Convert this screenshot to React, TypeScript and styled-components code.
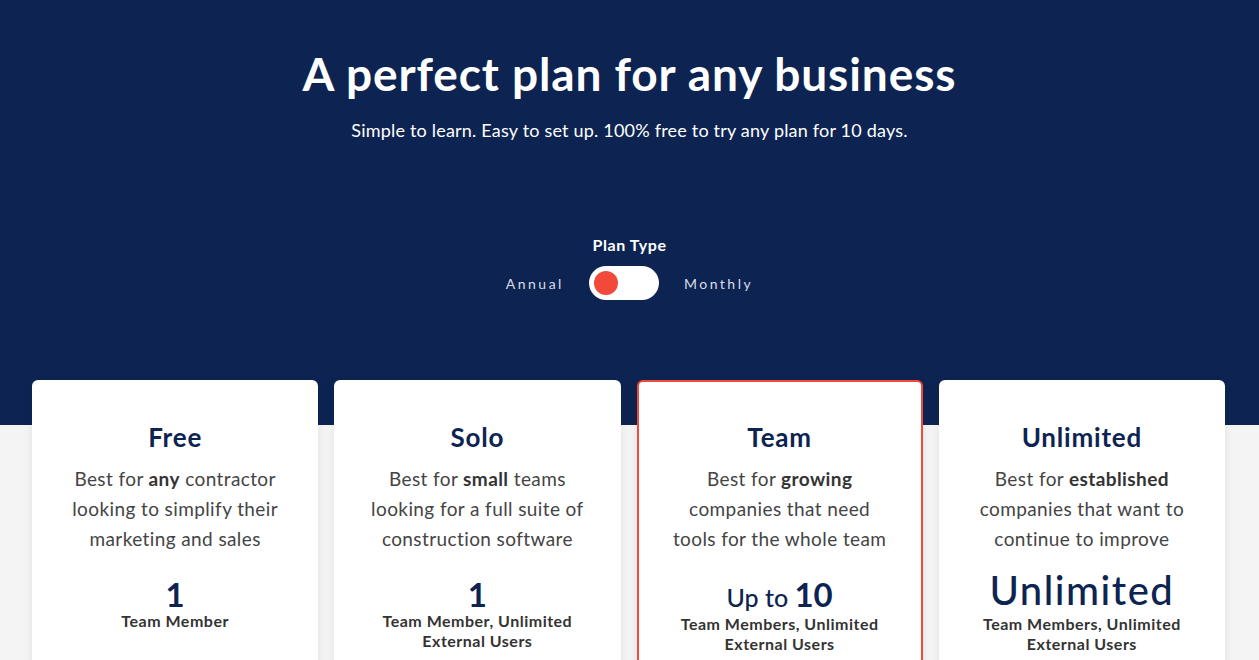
import React, { FC, useState } from "react";
import styled, { createGlobalStyle } from "styled-components";

const navy = "#0d2452";
const red = "#f24a3a";

const GlobalStyle = createGlobalStyle`
  * { box-sizing: border-box; }
  body {
    margin: 0;
    background: #f4f4f4;
    font-family: Lato, "Open Sans", sans-serif;
  }
`;

type Plan = {
  name: string;
  lead: string;
  bold: string;
  rest: string[];
  prefix?: string;
  count: string;
  big?: boolean;
  members: string[];
  featured?: boolean;
};

const plans: Plan[] = [
  {
    name: "Free",
    lead: "Best for ",
    bold: "any",
    rest: [" contractor", "looking to simplify their", "marketing and sales"],
    count: "1",
    members: ["Team Member"],
  },
  {
    name: "Solo",
    lead: "Best for ",
    bold: "small",
    rest: [" teams", "looking for a full suite of", "construction software"],
    count: "1",
    members: ["Team Member, Unlimited", "External Users"],
  },
  {
    name: "Team",
    lead: "Best for ",
    bold: "growing",
    rest: ["", "companies that need", "tools for the whole team"],
    prefix: "Up to",
    count: "10",
    members: ["Team Members, Unlimited", "External Users"],
    featured: true,
  },
  {
    name: "Unlimited",
    lead: "Best for ",
    bold: "established",
    rest: ["", "companies that want to", "continue to improve"],
    count: "Unlimited",
    big: true,
    members: ["Team Members, Unlimited", "External Users"],
  },
];

const PlanCard: FC<{ plan: Plan }> = ({ plan }) => (
  <Card $featured={!!plan.featured}>
    <CardTitle>{plan.name}</CardTitle>
    <Description>
      {plan.lead}
      <strong>{plan.bold}</strong>
      {plan.rest[0]}
      <br />
      {plan.rest[1]}
      <br />
      {plan.rest[2]}
    </Description>
    <Count $big={!!plan.big}>
      {plan.prefix && <Prefix>{plan.prefix} </Prefix>}
      {plan.count}
    </Count>
    <Members>
      {plan.members.map((m) => (
        <div key={m}>{m}</div>
      ))}
    </Members>
  </Card>
);

export default function App() {
  const [monthly, setMonthly] = useState(false);

  return (
    <>
      <GlobalStyle />
      <Page>
        <Hero>
          <Headline>A perfect plan for any business</Headline>
          <Subline>
            Simple to learn. Easy to set up. 100% free to try any plan for 10
            days.
          </Subline>
          <PlanType>Plan Type</PlanType>
          <ToggleRow>
            <ToggleLabel>Annual</ToggleLabel>
            <Toggle $on={monthly} onClick={() => setMonthly(!monthly)}>
              <Knob />
            </Toggle>
            <ToggleLabel>Monthly</ToggleLabel>
          </ToggleRow>
        </Hero>
        <Cards>
          {plans.map((p) => (
            <PlanCard key={p.name} plan={p} />
          ))}
        </Cards>
      </Page>
    </>
  );
}

const Page = styled.div`
  min-height: 660px;
  background: linear-gradient(${navy} 0, ${navy} 425px, #f4f4f4 425px);
`;

const Hero = styled.header`
  display: flex;
  flex-direction: column;
  align-items: center;
  padding-top: 48px;
  color: #fff;
`;

const Headline = styled.h1`
  margin: 0;
  font-size: 46px;
  font-weight: 700;
  line-height: 52px;
  letter-spacing: 0.9px;
`;

const Subline = styled.p`
  margin: 18px 0 0;
  font-size: 18px;
  line-height: 24px;
  letter-spacing: 0.2px;
`;

const PlanType = styled.div`
  margin-top: 93px;
  font-size: 16px;
  font-weight: 700;
  line-height: 20px;
  letter-spacing: 0.6px;
`;

const ToggleRow = styled.div`
  display: flex;
  align-items: center;
  gap: 25px;
  margin-top: 11px;
`;

const ToggleLabel = styled.span`
  font-size: 14px;
  letter-spacing: 2.5px;
  color: #d9dde6;
`;

const Toggle = styled.button<{ $on: boolean }>`
  width: 70px;
  height: 34px;
  border: none;
  border-radius: 17px;
  background: #fff;
  padding: 0 5px;
  display: flex;
  align-items: center;
  justify-content: ${(p) => (p.$on ? "flex-end" : "flex-start")};
  cursor: pointer;
`;

const Knob = styled.span`
  width: 24px;
  height: 24px;
  border-radius: 50%;
  background: ${red};
`;

const Cards = styled.section`
  display: grid;
  grid-template-columns: repeat(4, 1fr);
  gap: 16px;
  padding: 80px 34px 0 32px;
`;

const Card = styled.article<{ $featured: boolean }>`
  background: #fff;
  border-radius: 6px;
  border: 2px solid ${(p) => (p.$featured ? red : "#fff")};
  box-shadow: 0 2px 10px rgba(0, 0, 0, 0.08);
  height: 300px;
  padding: 38px 8px 0;
  display: flex;
  flex-direction: column;
  align-items: center;
  text-align: center;
`;

const CardTitle = styled.h2`
  margin: 0;
  font-size: 26px;
  font-weight: 700;
  line-height: 34px;
  letter-spacing: 0.8px;
  color: ${navy};
`;

const Description = styled.p`
  margin: 10px 0 0;
  font-size: 19px;
  font-weight: 400;
  line-height: 30px;
  letter-spacing: 0.4px;
  color: #444;

  strong {
    font-weight: 700;
    color: #333;
  }
`;

const Count = styled.div<{ $big: boolean }>`
  margin-top: ${(p) => (p.$big ? "12px" : "24px")};
  font-size: ${(p) => (p.$big ? "40px" : "33px")};
  font-weight: ${(p) => (p.$big ? 500 : 700)};
  line-height: ${(p) => (p.$big ? "48px" : "33px")};
  letter-spacing: ${(p) => (p.$big ? "1.5px" : "0")};
  color: ${navy};
`;

const Prefix = styled.span`
  font-size: 25px;
  font-weight: 500;
`;

const Members = styled.div`
  font-size: 16px;
  font-weight: 700;
  line-height: 20px;
  letter-spacing: 0.5px;
  color: #333;
`;
